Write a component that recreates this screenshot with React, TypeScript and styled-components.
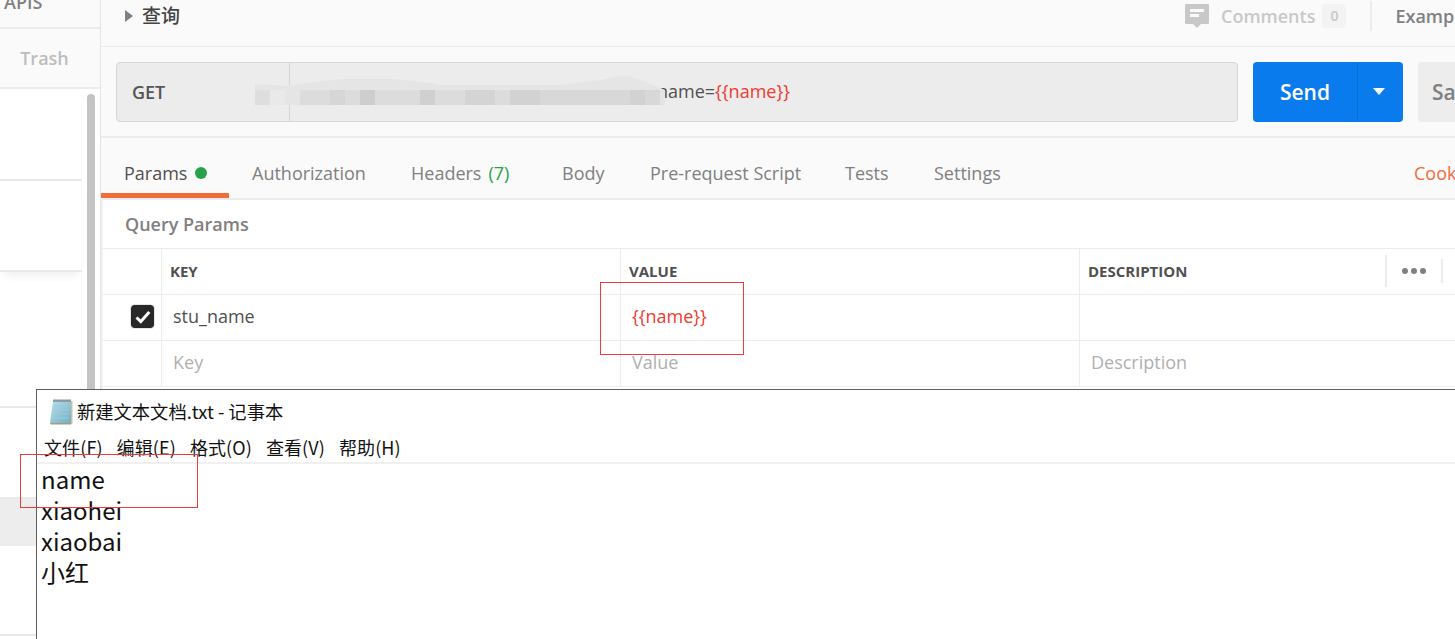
import React from 'react';
import styled, { createGlobalStyle } from 'styled-components';

const mosaicCells: [number, string][] = [
  [255, '#dedede'], [270, '#e9e9e9'], [300, '#dcdcdc'], [315, '#dcdcdc'], [330, '#d6d6d6'],
  [345, '#dcdcdc'], [360, '#cecece'], [375, '#dcdcdc'], [390, '#dcdcdc'], [405, '#dcdcdc'],
  [420, '#d0d0d0'], [435, '#dcdcdc'], [450, '#dcdcdc'], [465, '#d4d4d4'], [480, '#d4d4d4'],
  [495, '#dcdcdc'], [510, '#d2d2d2'], [525, '#d2d2d2'], [540, '#d8d8d8'], [555, '#d8d8d8'],
  [570, '#d8d8d8'], [585, '#d8d8d8'], [600, '#d8d8d8'], [615, '#d8d8d8'], [630, '#d2d2d2'],
  [645, '#d8d8d8'],
];

const tabs = [
  { label: 'Authorization', width: 159 },
  { label: 'Headers', width: 151, count: '(7)' },
  { label: 'Body', width: 88 },
  { label: 'Pre-request Script', width: 195 },
  { label: 'Tests', width: 89 },
  { label: 'Settings', width: 480 },
];

const App = () => (
  <>
    <GlobalStyle />
    <Page>
      <Sidebar>
        <ApisTab>APIs</ApisTab>
        <TrashTab>Trash</TrashTab>
        <ListRow $height={92} />
        <ListRow $height={91} $shadow />
        <ListRow $height={136} $full />
        <ListRow $height={91} />
        <ListRow $height={47} $selected />
        <ListRow $height={90} $full />
        <ScrollThumb />
      </Sidebar>
      <Main>
        <RequestHeader>
          <Caret />
          <RequestName>查询</RequestName>
          <CommentsIcon viewBox="0 0 24 24">
            <path
              fillRule="evenodd"
              d="M1 0h22a1 1 0 0 1 1 1v18a1 1 0 0 1-1 1h-7l-4 4-4-4H1a1 1 0 0 1-1-1V1a1 1 0 0 1 1-1zM5 5v3h14V5zM5 10v3h9v-3z"
              fill="#c8c8c8"
            />
          </CommentsIcon>
          <CommentsLabel>Comments</CommentsLabel>
          <CommentsBadge>0</CommentsBadge>
          <HeaderDivider />
          <ExamplesLabel>Examples</ExamplesLabel>
        </RequestHeader>
        <UrlRow>
          <UrlBox>
            <MethodCell>GET</MethodCell>
            <UrlText>
              name=<VarText>{'{{name}}'}</VarText>
            </UrlText>
          </UrlBox>
          <SendButton>
            <SendLabel>Send</SendLabel>
            <SendArrow>
              <ArrowDown />
            </SendArrow>
          </SendButton>
          <SaveButton>Save</SaveButton>
        </UrlRow>
        <TabBar>
          <ActiveTab>
            Params
            <GreenDot />
          </ActiveTab>
          {tabs.map((tab) => (
            <Tab key={tab.label} $width={tab.width}>
              {tab.label}
              {tab.count && <TabCount>{tab.count}</TabCount>}
            </Tab>
          ))}
          <CookiesLink>Cookies</CookiesLink>
        </TabBar>
        <SectionTitle>Query Params</SectionTitle>
        <ParamsTable>
          <HeadCell />
          <HeadCell>KEY</HeadCell>
          <HeadCell>VALUE</HeadCell>
          <HeadCell>
            DESCRIPTION
            <MoreDivider $height={32} $gap={198} />
            <MoreDots>
              <i />
              <i />
              <i />
            </MoreDots>
            <MoreDivider $height={24} $gap={0} />
          </HeadCell>
          <BodyCell $center>
            <CheckBox>
              <svg width="18" height="18" viewBox="0 0 18 18">
                <path d="M2.500 9.500l4.300 4 8.500-9.500" fill="none" stroke="#fff" strokeWidth="3" />
              </svg>
            </CheckBox>
          </BodyCell>
          <BodyCell>stu_name</BodyCell>
          <BodyCell $red>{'{{name}}'}</BodyCell>
          <BodyCell />
          <BodyCell />
          <BodyCell $muted>Key</BodyCell>
          <BodyCell $muted>Value</BodyCell>
          <BodyCell $muted>Description</BodyCell>
        </ParamsTable>
      </Main>

      <UrlMosaic width="420" height="40" viewBox="250 70 420 40">
        <path
          d="M255 84L285 86L300 84L340 79L395 79L430 83L440 85L560 85L600 80L620 76L630 76L650 84L665 90L665 105L255 105Z"
          fill="#e5e5e5"
        />
        {mosaicCells.map(([x, color]) => (
          <rect key={x} x={x} y={90} width={15} height={15} fill={color} />
        ))}
      </UrlMosaic>

      <ValueHighlight />

      <Notepad>
        <TitleBar>
          <svg width="26" height="27" viewBox="0 0 26 27">
            <defs>
              <linearGradient id="pad" x1="0" y1="0" x2="1" y2="1">
                <stop offset="0" stopColor="#b9dfe8" />
                <stop offset="1" stopColor="#6fb0c8" />
              </linearGradient>
            </defs>
            <path d="M5 3h18v22H2z" fill="url(#pad)" />
            <path d="M2 25h21v1.600H3z" fill="#a89a7c" />
            <path d="M23 3h1.500v23H23z" fill="#c8bfa8" />
            <path d="M5 1.500h18v2.400H5z" fill="#8d9aa0" />
            <path d="M6 8h15M5.500 12h15.500M5 16h16M4.500 20h16" stroke="#9fcbd8" strokeWidth="1" />
          </svg>
          <TitleText>新建文本文档.txt - 记事本</TitleText>
        </TitleBar>
        <MenuBar>
          <MenuItem>文件(F)</MenuItem>
          <MenuItem>编辑(E)</MenuItem>
          <MenuItem>格式(O)</MenuItem>
          <MenuItem>查看(V)</MenuItem>
          <MenuItem>帮助(H)</MenuItem>
        </MenuBar>
        <NoteBody>
          <NoteLine>name</NoteLine>
          <NoteLine>xiaohei</NoteLine>
          <NoteLine>xiaobai</NoteLine>
          <NoteLine>小红</NoteLine>
        </NoteBody>
      </Notepad>

      <NameHighlight />
    </Page>
  </>
);

const GlobalStyle = createGlobalStyle`
  html, body {
    margin: 0;
    padding: 0;
    background: #fff;
  }
  * {
    box-sizing: border-box;
  }
`;

const Page = styled.div`
  position: relative;
  display: flex;
  width: 1455px;
  height: 639px;
  overflow: hidden;
  font-family: 'Open Sans', 'Noto Sans CJK SC', sans-serif;
`;

const Sidebar = styled.aside`
  position: relative;
  flex: none;
  width: 101px;
  border-right: 1px solid #e4e4e4;
  background: #fff;
`;

const ApisTab = styled.div`
  height: 29px;
  padding-left: 4px;
  border-bottom: 2px solid #ececec;
  background: #fafafa;
  color: #808080;
  font-size: 18px;
  font-weight: 600;
  line-height: 4px;
  text-transform: uppercase;
  overflow: hidden;
`;

const TrashTab = styled.div`
  display: flex;
  align-items: center;
  justify-content: center;
  height: 60px;
  padding-right: 11px;
  border-bottom: 2px solid #ececec;
  background: #fafafa;
  color: #bdbdbd;
  font-size: 18px;
  font-weight: 600;
`;

const ListRow = styled.div<{ $height: number; $shadow?: boolean; $full?: boolean; $selected?: boolean }>`
  width: ${(p) => (p.$full || p.$selected ? '100%' : '82px')};
  height: ${(p) => p.$height}px;
  border-bottom: ${(p) => (p.$selected ? 'none' : '2px solid #e9e9e9')};
  background: ${(p) => (p.$selected ? '#ededed' : 'transparent')};
  box-shadow: ${(p) => (p.$shadow ? '0 8px 8px -4px rgba(0, 0, 0, 0.06)' : 'none')};
`;

const ScrollThumb = styled.div`
  position: absolute;
  top: 94px;
  left: 87px;
  width: 8px;
  height: 320px;
  border-radius: 4px;
  background: #c4c4c4;
`;

const Main = styled.main`
  flex: 1;
  min-width: 0;
  overflow: hidden;
  box-shadow: inset 3px 0 3px -2px rgba(0, 0, 0, 0.1);
`;

const RequestHeader = styled.header`
  display: flex;
  align-items: center;
  height: 47px;
  padding: 0 0 15px 24px;
  border-bottom: 1px solid #ececec;
  background: #fafafa;
  white-space: nowrap;
`;

const Caret = styled.span`
  flex: none;
  width: 0;
  height: 0;
  border-top: 6px solid transparent;
  border-bottom: 6px solid transparent;
  border-left: 8px solid #808080;
`;

const RequestName = styled.span`
  flex: none;
  width: 1043px;
  margin: 0 0 3px 9px;
  color: #444;
  font-family: 'Noto Sans CJK SC', sans-serif;
  font-size: 19px;
  font-weight: 500;
`;

const CommentsIcon = styled.svg`
  flex: none;
  width: 24px;
  height: 24px;
`;

const CommentsLabel = styled.span`
  flex: none;
  margin-left: 12px;
  color: #c8c8c8;
  font-size: 18px;
  font-weight: 600;
`;

const CommentsBadge = styled.span`
  display: flex;
  align-items: center;
  justify-content: center;
  flex: none;
  width: 24px;
  height: 24px;
  margin-left: 7px;
  border-radius: 3px;
  background: #f3f3f3;
  color: #c8c8c8;
  font-size: 14px;
  font-weight: 600;
`;

const HeaderDivider = styled.span`
  flex: none;
  width: 2px;
  height: 30px;
  margin: 0 23px 0 24px;
  background: #ececec;
`;

const ExamplesLabel = styled.span`
  flex: none;
  color: #808080;
  font-size: 18px;
  font-weight: 600;
`;

const UrlRow = styled.section`
  display: flex;
  align-items: center;
  height: 91px;
  padding: 0 0 0 15px;
  border-bottom: 2px solid #ececec;
  background: #fafafa;
`;

const UrlBox = styled.div`
  display: flex;
  flex: none;
  width: 1122px;
  height: 60px;
  border: 1px solid #d6d6d6;
  border-radius: 4px;
  background: #ececec;
`;

const MethodCell = styled.div`
  display: flex;
  align-items: center;
  width: 173px;
  padding-left: 15px;
  border-right: 1px solid #d6d6d6;
  color: #555;
  font-size: 18px;
  font-weight: 600;
`;

const UrlText = styled.div`
  display: flex;
  align-items: center;
  padding: 0 0 2px 367px;
  color: #505050;
  font-size: 18px;
  white-space: nowrap;
`;

const VarText = styled.span`
  color: #f03a30;
`;

const SendButton = styled.div`
  display: flex;
  flex: none;
  width: 150px;
  height: 60px;
  margin-left: 15px;
  border-radius: 4px;
  background: #097bed;
  color: #fff;
`;

const SendLabel = styled.div`
  display: flex;
  align-items: center;
  justify-content: center;
  width: 104px;
  font-size: 21px;
  font-weight: 600;
`;

const SendArrow = styled.div`
  display: flex;
  flex: 1;
  align-items: center;
  justify-content: center;
  padding-right: 3px;
  border-left: 1px solid #0a6fd6;
`;

const ArrowDown = styled.span`
  width: 0;
  height: 0;
  border-top: 7px solid #fff;
  border-right: 6px solid transparent;
  border-left: 6px solid transparent;
`;

const SaveButton = styled.div`
  display: flex;
  flex: none;
  align-items: center;
  width: 90px;
  height: 60px;
  margin-left: 15px;
  padding-left: 14px;
  border-radius: 4px;
  background: #ededed;
  color: #808080;
  font-size: 21px;
  font-weight: 600;
`;

const TabBar = styled.nav`
  display: flex;
  align-items: center;
  height: 62px;
  border-bottom: 2px solid #ececec;
  background: #fafafa;
  color: #808080;
  font-size: 18px;
  white-space: nowrap;
`;

const ActiveTab = styled.div`
  display: flex;
  align-items: center;
  flex: none;
  width: 128px;
  height: 60px;
  padding: 15px 0 0 23px;
  border-bottom: 5px solid #f26b3a;
  color: #505050;
`;

const GreenDot = styled.span`
  width: 12px;
  height: 12px;
  margin-left: 8px;
  border-radius: 50%;
  background: #26a34a;
`;

const Tab = styled.div<{ $width: number }>`
  flex: none;
  width: ${(p) => p.$width}px;
  padding: 10px 0 0 23px;
`;

const TabCount = styled.span`
  margin-left: 7px;
  color: #26a34a;
`;

const CookiesLink = styled.span`
  margin-left: 23px;
  padding-top: 10px;
  color: #f26b3a;
`;

const SectionTitle = styled.h2`
  display: flex;
  align-items: center;
  height: 48px;
  margin: 0;
  padding-left: 24px;
  color: #808080;
  font-size: 18px;
  font-weight: 600;
`;

const ParamsTable = styled.div`
  display: grid;
  grid-template-columns: 61px 459px 459px 1fr;
  grid-template-rows: 46px 46px 46px;
  border-top: 1px solid #ececec;
`;

const HeadCell = styled.div`
  display: flex;
  align-items: center;
  padding: 0 0 1px 8px;
  border-right: 1px solid #ececec;
  border-bottom: 1px solid #ececec;
  color: #505050;
  font-size: 15px;
  font-weight: 700;
  white-space: nowrap;
  &:nth-child(4) {
    border-right: none;
  }
`;

const BodyCell = styled.div<{ $center?: boolean; $red?: boolean; $muted?: boolean }>`
  display: flex;
  align-items: center;
  justify-content: ${(p) => (p.$center ? 'flex-end' : 'flex-start')};
  padding: ${(p) => (p.$center ? '0 6px 2px 0' : '0 0 4px 11px')};
  border-right: 1px solid #ececec;
  border-bottom: 1px solid #ececec;
  color: ${(p) => (p.$red ? '#f03a30' : p.$muted ? '#b0b0b0' : '#505050')};
  font-size: 18px;
  &:nth-child(4n) {
    border-right: none;
  }
`;

const CheckBox = styled.div`
  display: flex;
  align-items: center;
  justify-content: center;
  width: 25px;
  height: 25px;
  border: 1px solid #e6e6e6;
  border-radius: 4px;
  background: #282828;
  background-clip: padding-box;
`;

const MoreDivider = styled.span<{ $height: number; $gap: number }>`
  flex: none;
  width: 2px;
  height: ${(p) => p.$height}px;
  margin-left: ${(p) => p.$gap}px;
  background: #ececec;
`;

const MoreDots = styled.div`
  display: flex;
  flex: none;
  justify-content: center;
  gap: 3px;
  width: 54px;
  i {
    width: 6px;
    height: 6px;
    border-radius: 50%;
    background: #808080;
  }
`;

const UrlMosaic = styled.svg`
  position: absolute;
  top: 70px;
  left: 250px;
`;

const Notepad = styled.div`
  position: absolute;
  top: 389px;
  left: 36px;
  right: -2px;
  bottom: -2px;
  border: 1px solid #5f5f5f;
  background: #fff;
  color: #111;
  font-family: 'Noto Sans CJK SC', sans-serif;
`;

const TitleBar = styled.div`
  display: flex;
  align-items: center;
  height: 42px;
  padding: 0 0 0 11px;
`;

const TitleText = styled.span`
  margin-left: 3px;
  font-size: 18.3px;
  white-space: nowrap;
`;

const MenuBar = styled.div`
  display: flex;
  align-items: center;
  gap: 14px;
  height: 32px;
  padding-left: 7px;
  border-bottom: 2px solid #f0f0f0;
`;

const MenuItem = styled.span`
  font-size: 18px;
  letter-spacing: 0.1px;
  white-space: nowrap;
`;

const NoteBody = styled.div`
  margin-top: -1px;
  padding-left: 4px;
`;

const NoteLine = styled.div`
  height: 31px;
  font-size: 24px;
  line-height: 31px;
`;

const ValueHighlight = styled.div`
  position: absolute;
  top: 282px;
  left: 600px;
  width: 144px;
  height: 73px;
  border: 1px solid #f03a3a;
`;

const NameHighlight = styled.div`
  position: absolute;
  top: 454px;
  left: 20px;
  width: 178px;
  height: 54px;
  border: 1px solid #f03a3a;
`;

export default App;
